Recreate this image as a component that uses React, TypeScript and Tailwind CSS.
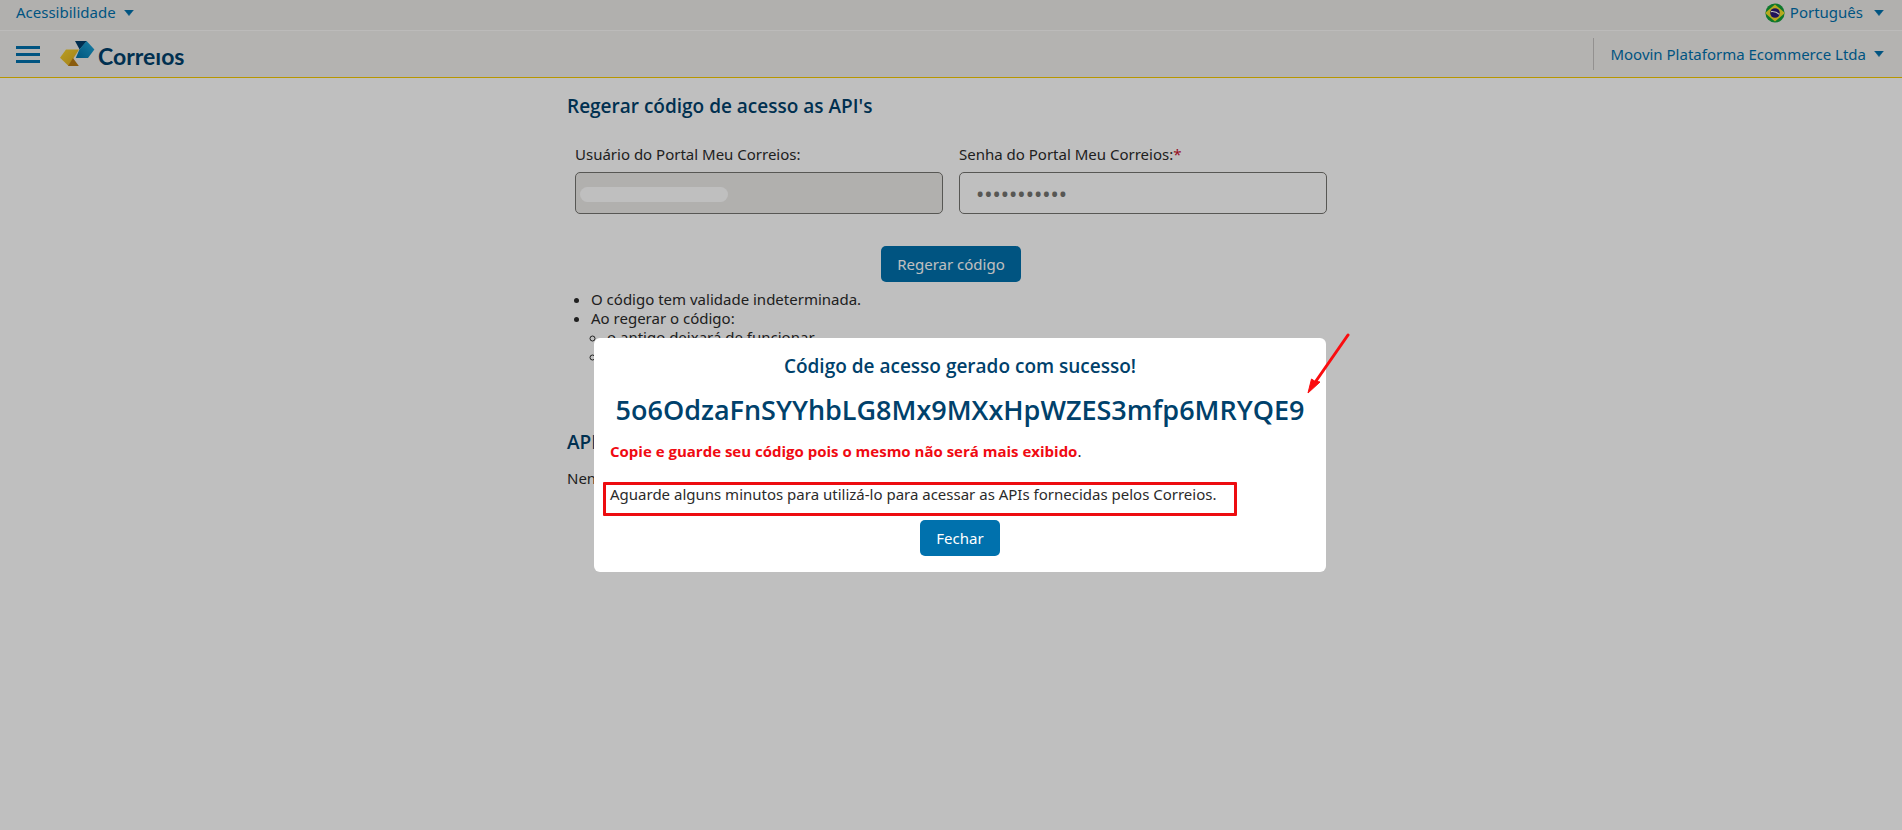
import React from "react";

function Caret() {
  return (
    <svg width="10" height="6" viewBox="0 0 10 6" aria-hidden="true">
      <path d="M0.6 0h8.8L5 5.6z" fill="currentColor" stroke="currentColor" strokeWidth="0.6" strokeLinejoin="round" />
    </svg>
  );
}

function Flag() {
  return (
    <svg width="20" height="20" viewBox="0 0 20 20" aria-hidden="true">
      <clipPath id="flag-disc">
        <circle cx="10" cy="10" r="9.6" />
      </clipPath>
      <g clipPath="url(#flag-disc)">
        <rect width="20" height="20" fill="#14a03a" />
        <path d="M10 1.6 20 10 10 18.4 0 10z" fill="#f3e12a" />
        <circle cx="10" cy="10" r="4.8" fill="#2c1a78" />
        <path d="M6 8.6c3-.4 6 .6 8.4 2.8" stroke="#fff" strokeWidth="1.2" fill="none" />
      </g>
    </svg>
  );
}

function Logo() {
  return (
    <a href="#inicio" aria-label="Correios" className="flex items-center gap-[3px]">
      <svg width="35" height="26" viewBox="0 0 35 26" aria-hidden="true">
        <defs>
          <linearGradient id="gold" x1="0" y1="0" x2="1" y2="1">
            <stop offset="0" stopColor="#f6d433" />
            <stop offset="1" stopColor="#dba81c" />
          </linearGradient>
          <linearGradient id="blue" x1="0" y1="1" x2="1" y2="0">
            <stop offset="0" stopColor="#0073a8" />
            <stop offset="1" stopColor="#22a9dc" />
          </linearGradient>
        </defs>
        <path d="M15 0h12l-7.4 8.6z" fill="#003e6b" />
        <path d="M26.6 0 34.4 8.6 28 17H15.8l3.6-8.4z" fill="url(#blue)" />
        <path d="M6 8.6h13L8.6 25 0 16.8z" fill="url(#gold)" />
        <path d="m13 17 5.8 8H8z" fill="#b87a12" />
      </svg>
      <span className="pt-1 font-['Lato',sans-serif] text-[23px] font-bold leading-7 text-[#00416b]">Correıos</span>
    </a>
  );
}

export default function App() {
  return (
    <div className="relative min-h-screen bg-white font-['Noto_Sans',sans-serif] text-[15px] leading-[19px] text-[#2b2b2b]">
      <div className="flex h-[30px] items-center justify-between bg-[#edebe9] px-4 pb-[5px] text-[#0071ad]">
        <button className="flex items-center gap-2">
          Acessibilidade <Caret />
        </button>
        <button className="flex items-center gap-[5px] pr-[2px]">
          <Flag /> Português <span className="ml-[6px]"><Caret /></span>
        </button>
      </div>
      <header className="flex h-12 items-center border-b border-t border-b-[#f5c800] border-t-[#fbfaf9] bg-[#f1efec] px-4">
        <button aria-label="Menu" className="flex w-6 flex-col gap-1">
          <span className="h-[3px] bg-[#0071ad]" />
          <span className="h-[3px] bg-[#0071ad]" />
          <span className="h-[3px] bg-[#0071ad]" />
        </button>
        <div className="ml-5"><Logo /></div>
        <button className="ml-auto flex h-8 items-center gap-2 border-l border-[#c4c2c0] pl-4 pr-[2px] text-[#0071ad]">
          Moovin Plataforma Ecommerce Ltda <Caret />
        </button>
      </header>

      <main className="mx-auto max-w-3xl pt-4">
        <h1 className="font-['Open_Sans',sans-serif] text-[19px] font-semibold leading-6 text-[#00416b]">Regerar código de acesso as API's</h1>
        <form className="px-2 pt-[26px]" onSubmit={(e) => e.preventDefault()}>
          <div className="grid grid-cols-2 gap-4">
            <div>
              <label htmlFor="usuario" className="block leading-5">Usuário do Portal Meu Correios:</label>
              <div className="mt-2 grid items-center">
                <input id="usuario" readOnly className="col-start-1 row-start-1 h-[42px] w-full rounded-[5px] border border-[#757470] bg-[#edebe9] px-4" />
                <span className="pointer-events-none col-start-1 row-start-1 ml-[5px] mt-[3px] h-[15px] w-[148px] rounded-full bg-white" />
              </div>
            </div>
            <div>
              <label htmlFor="senha" className="block leading-5">Senha do Portal Meu Correios:<span className="text-[#c8102e]">*</span></label>
              <input id="senha" type="password" placeholder="•••••••••••" className="mt-2 block h-[42px] w-full rounded-[5px] border border-[#757470] bg-white px-4 text-[22px] placeholder:text-[#757470]" />
            </div>
          </div>
          <div className="mt-8 flex justify-center">
            <button className="h-9 rounded-[5px] bg-[#0071ad] px-4 text-white">Regerar código</button>
          </div>
        </form>
        <ul className="mt-2 list-disc pl-6">
          <li>O código tem validade indeterminada.</li>
          <li>
            Ao regerar o código:
            <ul className="list-[circle] pl-4">
              <li>o antigo deixará de funcionar</li>
              <li>um novo será gerado</li>
            </ul>
          </li>
        </ul>
        <h2 className="mt-16 font-['Open_Sans',sans-serif] text-[19px] font-semibold leading-6 text-[#00416b]">API's</h2>
        <p className="mt-[15px]">Nenhuma API</p>
      </main>

      <div className="absolute inset-0 flex items-start justify-center bg-black/25 pl-[18px] pt-[338px]">
        <section role="dialog" aria-modal="true" className="relative w-[732px] rounded-md bg-white p-4">
          <h2 className="text-center font-['Open_Sans',sans-serif] text-[19px] font-semibold leading-6 text-[#00416b]">Código de acesso gerado com sucesso!</h2>
          <p className="mt-[14px] text-center font-['Open_Sans',sans-serif] text-[27px] font-semibold leading-9 text-[#00416b]">5o6OdzaFnSYYhbLG8Mx9MXxHpWZES3mfp6MRYQE9</p>
          <p className="mt-[14px]"><strong className="font-['Open_Sans',sans-serif] font-bold text-[#f00a12]">Copie e guarde seu código pois o mesmo não será mais exibido</strong>.</p>
          <p className="mt-6">Aguarde alguns minutos para utilizá-lo para acessar as APIs fornecidas pelos Correios.</p>
          <div className="mt-4 flex justify-center">
            <button className="h-9 rounded-[5px] bg-[#0071ad] px-4 text-white">Fechar</button>
          </div>
          <div className="pointer-events-none absolute left-[9px] top-[144px] h-[34px] w-[634px] rounded-[1px] border-[3px] border-[#ed0c10]" />
          <svg className="pointer-events-none absolute -right-6 -top-[6px]" width="44" height="62" viewBox="0 0 44 62" aria-hidden="true">
            <path d="M42 3 10 49" stroke="#fa0d10" strokeWidth="3" strokeLinecap="round" />
            <path d="M2 61 5.5 47l3 2 5.5 1z" fill="#fa0d10" stroke="#fa0d10" strokeWidth="1" strokeLinejoin="round" />
          </svg>
        </section>
      </div>
    </div>
  );
}
